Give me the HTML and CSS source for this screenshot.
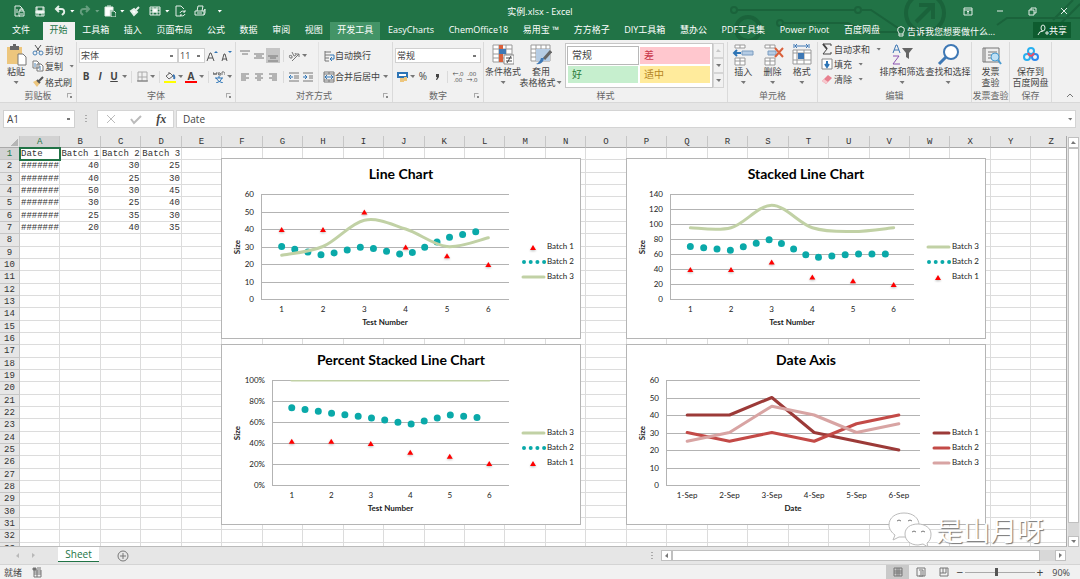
FILE: index.html
```
<!DOCTYPE html>
<html lang="zh-CN">
<head>
<meta charset="UTF-8">
<meta name="viewport" content="width=device-width, initial-scale=1.0">
<title>实例.xlsx - Excel</title>
<link rel="stylesheet" href="styles.css">
</head>
<body>
<header class="top">
    <svg class="circuit" viewBox="0 0 360 40" aria-hidden="true">
        <path d="M17 10H135M142 10H151L178 28 206 36M64 23H128L145 32H180M277 25 287 18H360M333 20 353 0M340 24 360 4M0 30H14"/>
        <circle cx="14" cy="10" r="3"/><circle cx="138" cy="10" r="3"/><circle cx="60" cy="23" r="3"/>
        <circle cx="28" cy="29" r="12" class="thick"/><path d="M21 26H35M21 31H35"/>
        <circle cx="205" cy="13" r="19" class="thick"/><path class="thick" d="M196 22 213 5M199 5H213V19"/>
    </svg>
    <div class="titlebar">
        <div class="quick">
            <button aria-label="打印预览"><svg viewBox="0 0 12 12"><path d="M6 11H1V1H6L8 3V5M5 6H10V11H5ZM6 6V4H9V6M6 9H9M3 4V8"/></svg></button>
            <button aria-label="保存"><svg viewBox="0 0 12 12"><path d="M2 2H10V11H2ZM3 2V6H9V2M4 11V8H8V11"/><path d="M2 6H10V8H2Z" fill="#fff"/></svg></button>
            <button aria-label="撤销"><svg viewBox="0 0 12 12" class="bold"><path d="M5 1 2 4 5 7M2 4H7Q11 4 10 8L8 10"/></svg></button><i class="arrow"></i>
            <button aria-label="恢复" class="dim"><svg viewBox="0 0 12 12" class="bold"><path d="M7 1 10 4 7 7M10 4H5Q1 4 2 8L4 10"/></svg></button><i class="arrow dim"></i>
            <button aria-label="粘贴"><svg viewBox="0 0 12 12"><path d="M1 2H9V5H6V11H1Z" fill="#fff"/><path d="M7 6H10L12 8V12H7ZM3 1H7"/></svg></button><i class="arrow"></i>
            <button aria-label="格式刷"><svg viewBox="0 0 12 12"><path d="M2 6 5 4 8 7 5 10ZM7 5 10 2" fill="#fff" class="bold"/></svg></button>
            <button aria-label="表格"><svg viewBox="0 0 12 12"><path d="M1 2H11V10H1ZM1 4H11M1 7H11M4 2V10M8 2V10"/><path d="M4 4H8V7H4Z" fill="#fff"/></svg></button><i class="arrow"></i>
            <button aria-label="刷新"><svg viewBox="0 0 12 12"><path d="M5 11H2V1H7L10 4M6 8A3 3 0 0 1 11 7M11 5V7H9M11 9A3 3 0 0 1 6 10M6 12V10H8"/></svg></button>
            <button aria-label="快速打印"><svg viewBox="0 0 12 12"><path d="M3 6 4 1H9L8 6M1 6H10V10H1ZM3 8H8M10 6 11 4V8L10 10"/></svg></button>
            <button aria-label="自定义"><i class="arrow"></i></button>
        </div>
        <div class="doc-name">实例.xlsx - Excel</div>
        <div class="win-btns">
            <button aria-label="功能区"><svg viewBox="0 0 12 12"><path d="M2 3H10V10H2ZM2 5H10M6 9V6M5 7 6 6 7 7"/></svg></button>
            <button aria-label="最小化"><svg viewBox="0 0 12 12"><path d="M3 6H9"/></svg></button>
            <button aria-label="还原"><svg viewBox="0 0 12 12"><path d="M3 5H8V10H3ZM5 5V3H10V8H8"/></svg></button>
            <button aria-label="关闭"><svg viewBox="0 0 12 12"><path d="M3 3 9 9M9 3 3 9"/></svg></button>
        </div>
    </div>
    <div class="tabbar">
        <nav class="tabs">
            <a href="#" class="file">文件</a>
            <a href="#" class="active">开始</a>
            <a href="#">工具箱</a>
            <a href="#">插入</a>
            <a href="#">页面布局</a>
            <a href="#">公式</a>
            <a href="#">数据</a>
            <a href="#">审阅</a>
            <a href="#">视图</a>
            <a href="#" class="hover">开发工具</a>
            <a href="#">EasyCharts</a>
            <a href="#">ChemOffice18</a>
            <a href="#">易用宝 ™</a>
            <a href="#">方方格子</a>
            <a href="#">DIY工具箱</a>
            <a href="#">慧办公</a>
            <a href="#">PDF工具集</a>
            <a href="#">Power Pivot</a>
            <a href="#">百度网盘</a>
        </nav>
        <button class="tell"><svg viewBox="0 0 12 12"><path d="M4 8Q2 6 3 3 6 0 9 3 10 6 8 8V11H4ZM4 9H8"/></svg>告诉我您想要做什么...</button>
        <button class="share"><svg viewBox="0 0 12 12"><path d="M6 1A2 3 0 0 1 6 7 2 3 0 0 1 6 1M1 11Q2 7 6 7M8 9H12M10 7V11"/></svg>共享</button>
    </div>
</header>

<section class="ribbon">
    <div class="group">
        <div class="body">
            <button class="big paste">
                <svg viewBox="0 0 22 22"><path d="M2 3H17V20H2Z" fill="#edc67d"/><path d="M5 2H8V0H11V2H14V6H5Z" fill="#666"/><path d="M13 10H18L21 13V21H13Z" fill="#fff" stroke="#777"/></svg>
                粘贴<i class="arrow"></i>
            </button>
            <div class="stack">
                <button><svg viewBox="0 0 12 12"><path d="M3 1 8 8M9 1 4 8" stroke="#555"/><g stroke="#4a83b8"><circle cx="3" cy="9" r="2"/><circle cx="9" cy="9" r="2"/></g></svg>剪切</button>
                <button><svg viewBox="0 0 12 12"><path d="M1 1H5L7 3V8H1ZM5 4H9L11 6V11H5Z" fill="#fff" stroke="#777"/><path d="M2 4H4M2 6H4M7 7H9M7 9H9" stroke="#4a83b8"/></svg>复制<i class="arrow"></i></button>
                <button><svg viewBox="0 0 12 12"><path d="M1 6 5 4 8 7 5 11Z" fill="#edc67d"/><path d="M5 4 8 7M7 5 11 1" stroke="#555" stroke-width="2"/></svg>格式刷</button>
            </div>
        </div>
        <footer>剪贴板<button class="launch" aria-label="剪贴板设置"></button></footer>
    </div>

    <div class="group">
        <div class="body rows">
            <div class="row">
                <select class="combo font-name" aria-label="字体"><option>宋体</option></select>
                <select class="combo font-size" aria-label="字号"><option>11</option></select>
                <button class="tool" aria-label="增大字号"><svg viewBox="0 0 12 12"><path d="M1 11 4 3H5L8 11M2 8H7" stroke="#555"/><path d="M8 3 10 1 12 3Z" fill="#2e75b6"/></svg></button>
                <button class="tool" aria-label="减小字号"><svg viewBox="0 0 12 12"><path d="M2 11 4 4H5L7 11M3 9H7" stroke="#555"/><path d="M8 1 10 3 12 1Z" fill="#2e75b6"/></svg></button>
            </div>
            <div class="row">
                <button class="tool"><b>B</b></button>
                <button class="tool"><b><em>I</em></b></button>
                <button class="tool"><b><u>U</u></b></button><i class="arrow"></i>
                <span class="sep"></span>
                <button class="tool" aria-label="边框"><svg viewBox="0 0 12 12"><path d="M2 1H11V10H2ZM2 6H11M6 1V10" stroke="#aaa"/><path d="M1 10H12" stroke="#777"/></svg></button><i class="arrow"></i>
                <span class="sep"></span>
                <button class="tool" aria-label="填充颜色"><svg viewBox="0 0 12 12"><path d="M2 5 6 2 9 5 5 8ZM5 3V1" stroke="#666"/><path d="M9 4Q11 5 10 8" stroke="#3e78b5" stroke-width="2"/><path d="M0 10H12V12H0Z" fill="#ff0"/></svg></button><i class="arrow"></i>
                <button class="tool font-color" aria-label="字体颜色"><b>A</b></button><i class="arrow"></i>
                <span class="sep"></span>
                <button class="tool" aria-label="拼音"><svg viewBox="0 0 12 12"><path d="M0 1 1 4 2 2 3 4 4 1M5 3H8Q7 1 5 2 5 5 8 4M9 4V1Q12 0 12 4" stroke="#777"/><path d="M2 7H10M6 5V7M3 12Q8 11 9 7M3 7Q5 11 10 12" stroke="#2e75b6"/></svg></button><i class="arrow"></i>
            </div>
        </div>
        <footer>字体<button class="launch" aria-label="字体设置"></button></footer>
    </div>

    <div class="group">
        <div class="body">
            <div class="rows align">
                <div class="row">
                    <button class="tool" aria-label="顶端对齐"><svg viewBox="0 0 12 12"><path d="M1 1H11M3 4H9"/></svg></button>
                    <button class="tool" aria-label="垂直居中"><svg viewBox="0 0 12 12"><path d="M1 4H11M3 6H9M1 8H11"/></svg></button>
                    <button class="tool on" aria-label="底端对齐"><svg viewBox="0 0 12 12"><path d="M1 6H11M3 8H9M1 11H11"/></svg></button>
                    <span class="sep"></span>
                    <button class="tool" aria-label="方向"><svg viewBox="0 0 12 12"><path d="M4 11 11 4M8 4H11V7M2 8Q0 4 4 6M2 8Q5 9 4 6M4 2 6 6Q9 6 7 3"/></svg></button><i class="arrow"></i>
                </div>
                <div class="row">
                    <button class="tool" aria-label="左对齐"><svg viewBox="0 0 12 12"><path d="M2 3H10M2 5H7M2 7H10M2 9H7"/></svg></button>
                    <button class="tool" aria-label="居中"><svg viewBox="0 0 12 12"><path d="M2 3H10M4 5H8M2 7H10M4 9H8"/></svg></button>
                    <button class="tool" aria-label="右对齐"><svg viewBox="0 0 12 12"><path d="M2 3H10M5 5H10M2 7H10M5 9H10"/></svg></button>
                    <span class="sep"></span>
                    <button class="tool" aria-label="减少缩进"><svg viewBox="0 0 12 12"><path d="M1 2H11M6 5H11M6 7H11M1 10H11"/><path d="M5 6H1M3 4 1 6 3 8" stroke="#2e75b6"/></svg></button>
                    <button class="tool" aria-label="增加缩进"><svg viewBox="0 0 12 12"><path d="M1 2H11M7 5H11M7 7H11M1 10H11"/><path d="M1 6H5M3 4 5 6 3 8" stroke="#2e75b6"/></svg></button>
                </div>
            </div>
            <div class="rows merge">
                <button class="row"><svg viewBox="0 0 12 12"><path d="M2 1V11M2 2H8M2 5H7M2 8H6M2 11H6"/><path d="M7 5H11V9H7M9 7 7 9 9 11" stroke="#2e75b6"/></svg>自动换行</button>
                <button class="row"><svg viewBox="0 0 12 12"><path d="M1 1H11V11H1ZM1 3H11M1 9H11M6 1V3M6 9V11"/><path d="M2 6H10M4 4 2 6 4 8M8 4 10 6 8 8" stroke="#2e75b6"/></svg>合并后居中<i class="arrow"></i></button>
            </div>
        </div>
        <footer>对齐方式<button class="launch" aria-label="对齐设置"></button></footer>
    </div>

    <div class="group">
        <div class="body rows">
            <div class="row">
                <select class="combo number" aria-label="数字格式"><option>常规</option></select>
            </div>
            <div class="row">
                <button class="tool" aria-label="会计格式"><svg viewBox="0 0 12 12"><path d="M1 1H12V7H1Z" fill="#2e75b6"/><path d="M3 3H10V5H3Z" fill="#fff"/><path d="M4 7H8V11H4ZM8 6H11V10H8Z" fill="#edc67d"/></svg></button><i class="arrow"></i>
                <button class="tool">%</button>
                <button class="tool" aria-label="千位分隔"><svg viewBox="0 0 12 12"><path d="M5 3H8V6L6 9H5L6 6H5Z" fill="#444"/></svg></button>
                <span class="sep"></span>
                <button class="tool dec"><span>←.0</span><span>.00</span></button>
                <button class="tool dec"><span>.00</span><span>→.0</span></button>
            </div>
        </div>
        <footer>数字<button class="launch" aria-label="数字设置"></button></footer>
    </div>

    <div class="group">
        <div class="body">
            <button class="big">
                <svg viewBox="0 0 22 22"><path d="M1 1H20V18H1ZM7 1V18M14 1V18M1 5H20M1 10H20M1 14H20" fill="#fff" stroke="#999"/><path d="M7 1H11V5H7ZM7 10H11V18H7Z" fill="#d9603b"/><path d="M7 5H14V10H7Z" fill="#3e78b5"/><path d="M12 11H22V20H12Z" fill="#fff" stroke="#888"/><path d="M14 14H20M14 17H20M19 12 15 19" stroke="#444"/></svg>
                条件格式<i class="arrow"></i>
            </button>
            <button class="big">
                <svg viewBox="0 0 22 22"><path d="M1 1H20V17H1ZM1 5H20M1 9H20M1 13H20M6 1V17M11 1V17M16 1V17" fill="#fff" stroke="#999"/><path d="M6 5H20V17H6Z" fill="#b5cce4"/><path d="M21 7 14 15" stroke="#666" stroke-width="3"/><path d="M14 14Q13 21 6 20 10 18 11 14Z" fill="#3e78b5"/></svg>
                套用<span>表格格式<i class="arrow"></i></span>
            </button>
            <div class="gallery">
                <button class="style normal">常规</button>
                <button class="style bad">差</button>
                <button class="style good">好</button>
                <button class="style neutral">适中</button>
            </div>
            <div class="gallery-nav">
                <button aria-label="上一行"><i class="arrow up dim"></i></button>
                <button aria-label="下一行"><i class="arrow"></i></button>
                <button aria-label="更多"><i class="arrow"></i></button>
            </div>
        </div>
        <footer>样式</footer>
    </div>

    <div class="group">
        <div class="body even">
            <button class="big">
                <svg viewBox="0 0 22 22"><path d="M3 1H13V4H3ZM8 1V4M3 14H13V21H3ZM8 14V21M3 17H13" fill="#fff" stroke="#999"/><path d="M10 7H21V11H10Z" fill="#b5cce4" stroke="#7b9cc0"/><path d="M9 9H2M5 6 2 9 5 12" stroke="#2e75b6" stroke-width="2"/></svg>
                插入<i class="arrow"></i>
            </button>
            <button class="big">
                <svg viewBox="0 0 22 22"><path d="M3 1H13V4H3ZM8 1V4M3 14H13V21H3ZM8 14V21M3 17H13" fill="#fff" stroke="#999"/><path d="M6 7H14V11H6Z" fill="#b5cce4" stroke="#7b9cc0"/><path d="M13 4 21 13M21 4 13 13" stroke="#d9603b" stroke-width="2"/></svg>
                删除<i class="arrow"></i>
            </button>
            <button class="big">
                <svg viewBox="0 0 22 22"><path d="M2 6H20V20H2ZM2 9H20M2 16H20M6 6V20M13 6V20" fill="#fff" stroke="#999"/><path d="M7 9H13V15H7Z" fill="#3e78b5"/><path d="M4 2H17M6 0 4 2 6 4M15 0 17 2 15 4M3 0V4M18 0V4" stroke="#3e78b5"/></svg>
                格式<i class="arrow"></i>
            </button>
        </div>
        <footer>单元格</footer>
    </div>

    <div class="group">
        <div class="body">
            <div class="stack edit">
                <button><svg viewBox="0 0 12 12"><path d="M10 3V1H2L6 6 2 11H10V9" stroke="#444"/><path d="M2 1 6 6" stroke="#444" stroke-width="2"/></svg>自动求和<i class="arrow"></i></button>
                <button><svg viewBox="0 0 12 12"><path d="M1 1H11V11H1Z" fill="#fff" stroke="#888"/><path d="M6 3V8M4 6 6 9 8 6" stroke="#2e75b6" stroke-width="2"/></svg>填充<i class="arrow"></i></button>
                <button><svg viewBox="0 0 12 12"><path d="M1 8 7 2 11 5 5 11Z" fill="#e8808f"/><path d="M1 8 3 6 7 9 5 11Z" fill="#f7c9cf"/></svg>清除<i class="arrow"></i></button>
            </div>
            <button class="big wide">
                <svg viewBox="0 0 22 22"><path d="M2 9 5 1H6L9 9M3 6H8" stroke="#3e78b5" stroke-width="1"/><path d="M2 12H8L2 20H9" stroke="#8b52b0" stroke-width="1"/><path d="M11 4H22L18 9V15L15 13V9Z" fill="#666"/></svg>
                排序和筛选<i class="arrow"></i>
            </button>
            <button class="big wide">
                <svg viewBox="0 0 22 22"><circle cx="14" cy="8" r="7" fill="#fff" stroke="#3e78b5" stroke-width="2"/><path d="M9 13 2 20" stroke="#3e78b5" stroke-width="3"/></svg>
                查找和选择<i class="arrow"></i>
            </button>
        </div>
        <footer>编辑</footer>
    </div>

    <div class="group">
        <div class="body even">
            <button class="big">
                <svg viewBox="0 0 22 22"><path d="M3 4H19V18H3ZM5 4V18M8 8H17M8 11H12M8 14H12" fill="#eee" stroke="#777"/><circle cx="15" cy="13" r="4" fill="#bfe0f5" stroke="#4a9bd0"/><path d="M18 16 21 20" stroke="#4a9bd0" stroke-width="2"/></svg>
                发票<span>查验</span>
            </button>
        </div>
        <footer>发票查验</footer>
    </div>

    <div class="group">
        <div class="body even">
            <button class="big">
                <svg viewBox="0 0 22 22"><g stroke-width="2"><circle cx="7" cy="13" r="3" stroke="#27b0f0"/><circle cx="15" cy="13" r="3" stroke="#2b87ee"/><circle cx="11" cy="7" r="3" stroke="#27b0f0"/><path d="M8 9Q11 15 14 9" stroke="#ec4c65"/></g></svg>
                保存到<span>百度网盘</span>
            </button>
        </div>
        <footer>保存</footer>
    </div>
    <button class="collapse" aria-label="折叠功能区"><svg viewBox="0 0 12 12"><path d="M3 7 6 4 9 7"/></svg></button>
</section>

<section class="formula">
    <select class="combo name-box" aria-label="名称框"><option>A1</option></select>
    <span class="dots"></span>
    <div class="fx">
        <button aria-label="取消"><svg viewBox="0 0 12 12"><path d="M2 2 10 10M10 2 2 10"/></svg></button>
        <button aria-label="输入"><svg viewBox="0 0 12 12"><path d="M1 6 4 10 11 3" stroke-width="2"/></svg></button>
        <button class="fn">fx</button>
    </div>
    <input class="formula-text" type="text" value="Date" aria-label="编辑栏">
    <button class="expand" aria-label="展开编辑栏"><i class="arrow"></i></button>
</section>

<main class="work">
    <div class="sheet">
        <table id="grid"></table>
        <div class="chart c1" id="line"></div>
        <div class="chart c2" id="stacked"></div>
        <div class="chart c3" id="percent"></div>
        <div class="chart c4" id="date"></div>
    </div>
    <div class="vscroll">
        <button aria-label="向上"><i class="arrow up"></i></button>
        <span class="thumb"></span>
        <span class="track"></span>
        <button aria-label="向下"><i class="arrow"></i></button>
    </div>
    <div class="watermark">
        <svg viewBox="0 0 44 38"><path d="M16 4C7 4 1 9 1 16 1 20 4 24 7 26L5 31 11 28H17C25 28 31 22 31 16 31 9 25 4 16 4Z"/><path d="M30 15C22 15 17 19 17 25S22 36 30 36L35 35 40 38 39 34C42 32 43 29 43 25 43 19 37 15 30 15Z"/><path class="eyes" d="M9 12Q11 10 13 12M20 12Q22 10 24 12M24 23Q26 21 28 23M33 23Q35 21 37 23"/></svg>
        <span>是山月呀</span>
    </div>
</main>

<section class="sheetbar">
    <div class="sheet-nav">
        <i class="arrow left"></i><i class="arrow right"></i>
    </div>
    <a href="#" class="sheet-tab">Sheet</a>
    <button class="add" aria-label="新工作表"><svg viewBox="0 0 12 12"><circle cx="6" cy="6" r="5"/><path d="M3 6H9M6 3V9"/></svg></button>
    <span class="dots"></span>
    <div class="hscroll">
        <button aria-label="向左"><i class="arrow left"></i></button>
        <span class="thumb"></span>
        <span class="track"></span>
        <button aria-label="向右"><i class="arrow right"></i></button>
    </div>
</section>

<footer class="status">
    <span>就绪</span>
    <svg class="macro" viewBox="0 0 12 12"><path d="M3 4H10V11H3ZM3 6H10M3 8H10M6 4V11"/><path d="M2 2H5V4H2ZM6 2H10" fill="#666"/></svg>
    <div class="views">
        <button class="on" aria-label="普通"><svg viewBox="0 0 12 12"><path d="M2 2H10V10H2ZM2 5H10M2 7H10M5 2V10M7 2V10"/></svg></button>
        <button aria-label="页面布局"><svg viewBox="0 0 12 12"><path d="M2 2H10V10H2ZM4 4H8V10H4M6 5V9"/></svg></button>
        <button aria-label="分页预览"><svg viewBox="0 0 12 12"><path d="M2 2H10V10H2ZM5 2V7H8V2M2 7H5"/></svg></button>
    </div>
    <button class="zoom-btn" aria-label="缩小">−</button>
    <input class="zoom" type="range" min="10" max="190" value="90" aria-label="缩放">
    <button class="zoom-btn" aria-label="放大">+</button>
    <span class="zoom-num">90%</span>
</footer>
<script src="script.js"></script>
</body>
</html>
```

FILE: styles.css
```
* {
    box-sizing: border-box;
}
body {
    margin: 0;
    height: 100vh;
    display: flex;
    flex-direction: column;
    overflow: hidden;
    background: #e6e6e6;
    color: #444;
    font: 9px/11px "Open Sans", "Noto Sans CJK SC", sans-serif;
}
button,
select,
input {
    margin: 0;
    padding: 0;
    border: 0;
    background: none;
    color: inherit;
    font: inherit;
}
button {
    display: flex;
    align-items: center;
    justify-content: center;
    white-space: nowrap;
}
a {
    color: inherit;
    text-decoration: none;
}
svg {
    display: block;
    width: 12px;
    height: 12px;
    flex: none;
    fill: none;
    stroke: #777;
}
.ribbon svg [fill]:not([stroke]) {
    stroke: none;
}
.arrow {
    flex: none;
    width: 7px;
    height: 3px;
    background: #777;
    clip-path: polygon(1px 0, 6px 0, 4px 3px);
}
.arrow.up {
    transform: rotate(180deg);
}
.arrow.left {
    transform: rotate(90deg);
}
.arrow.right {
    transform: rotate(-90deg);
}
.dim {
    opacity: .35;
}

/* title bar and tabs */
.top {
    position: relative;
    flex: none;
    background: #217346;
    color: #fff;
}
.top svg {
    stroke: #e4efe8;
}
.top .arrow {
    width: 5px;
    background: #fff;
    clip-path: polygon(0 0, 5px 0, 2px 3px);
}
.top .bold {
    stroke-width: 2;
}
.top .circuit {
    position: absolute;
    right: 0;
    top: 0;
    width: 360px;
    height: 40px;
    stroke: #1a633b;
    stroke-width: 2;
}
.circuit .thick {
    stroke-width: 4;
}
.titlebar {
    position: relative;
    display: grid;
    grid-template-columns: 1fr auto 1fr;
    align-items: center;
    height: 22px;
}
.quick {
    display: flex;
    align-items: center;
    padding-left: 10px;
}
.quick button {
    width: 20px;
}
.win-btns {
    display: flex;
    justify-content: flex-end;
}
.win-btns button {
    width: 32px;
}
.tabbar {
    position: relative;
    display: flex;
    height: 18px;
}
.tabs {
    flex: 1;
    display: flex;
    justify-content: space-between;
    padding-right: 6px;
}
.tabs a {
    padding: 0 7px;
    line-height: 16px;
    white-space: nowrap;
}
.tabs .file {
    padding: 0 12px;
}
.tabs .active {
    background: #f1f1f1;
    color: #217346;
}
.tabs .hover {
    background: #439467;
}
.tell {
    width: 140px;
    justify-content: flex-start;
    padding-left: 2px;
}
.share {
    width: 38px;
    height: 16px;
    margin-right: 9px;
    background: #0e5c2f;
}

/* ribbon */
.ribbon {
    flex: none;
    display: grid;
    grid-template-columns: 77px 159px 157px 91px 1fr 90px 154px 38px 42px 28px;
    height: 63px;
    background: #f1f1f1;
    border-bottom: 1px solid #d8d8d8;
}
.group {
    display: flex;
    flex-direction: column;
    margin: 2px 0 0;
    border-right: 1px solid #dadada;
}
.body {
    flex: 1;
    display: flex;
}
.group footer {
    position: relative;
    text-align: center;
    white-space: nowrap;
    color: #666;
    height: 12px;
}
.launch {
    position: absolute;
    right: 4px;
    bottom: 4px;
    width: 5px;
    height: 5px;
    border: 1px solid #aaa;
    border-right-color: transparent;
    border-bottom-color: transparent;
}
.launch::after {
    content: "";
    position: absolute;
    right: -1px;
    bottom: -1px;
    width: 2px;
    height: 2px;
    background: #888;
}
.big {
    flex-direction: column;
    justify-content: flex-start;
    width: 38px;
    padding-top: 2px;
}
.big svg {
    width: 22px;
    height: 22px;
}
.big .arrow {
    margin-top: 4px;
}
.big span {
    display: flex;
    align-items: center;
}
.big span .arrow {
    margin: 0;
}
.big.wide {
    width: 46px;
}
.paste {
    width: 32px;
}
.stack {
    display: flex;
    flex-direction: column;
    gap: 4px;
    padding-top: 2px;
}
.stack button {
    justify-content: flex-start;
    gap: 1px;
}
.stack.edit {
    width: 61px;
    gap: 3px;
    padding: 1px 0 0 3px;
}
.stack .arrow {
    margin-left: 4px;
}
.even {
    justify-content: space-evenly;
}
.even .big {
    width: 28px;
}
.rows {
    display: flex;
    flex-direction: column;
    gap: 6px;
    padding: 6px 2px 0;
}
.row {
    display: flex;
    align-items: center;
    justify-content: flex-start;
    height: 15px;
}
.combo {
    appearance: none;
    height: 15px;
    padding: 0 4px 0 1px;
    border: 1px solid #d0d0d0;
    background: #fff linear-gradient(#777, #777) no-repeat right 4px center / 3px 2px;
}
.font-name {
    width: 99px;
}
.font-size {
    width: 27px;
}
.number {
    flex: 1;
}
.tool {
    width: 14px;
    height: 15px;
    font-size: 10px;
}
.tool.on {
    background: #c5c5c5;
}
.sep {
    width: 1px;
    height: 12px;
    margin: 0 3px;
    background: #dadada;
}
.font-color b {
    width: 12px;
    height: 12px;
    line-height: 10px;
    border-bottom: 2px solid #f00;
}
.dec {
    flex-direction: column;
    font-size: 6px;
    line-height: 6px;
}
.align {
    width: 83px;
    border-right: 1px solid #e2e2e2;
}
.merge {
    padding-left: 4px;
}
.merge .arrow {
    margin-left: 2px;
}
.gallery {
    flex: 1;
    display: grid;
    grid-template-columns: 1fr 1fr;
    grid-auto-rows: 17px;
    gap: 2px;
    height: 45px;
    padding: 3px 2px;
    margin: 1px 0 0 5px;
    border: 1px solid #c6c6c6;
    background: #fff;
}
.style {
    justify-content: flex-start;
    padding-left: 4px;
    font: 10px/12px "Liberation Serif", "Noto Sans CJK SC", serif;
}
.normal {
    outline: 1px solid #b8b8b8;
}
.bad {
    background: #ffc7ce;
    color: #c9354a;
}
.good {
    background: #c6efce;
    color: #2a7a3a;
}
.neutral {
    background: #ffeb9c;
    color: #b5851f;
}
.gallery-nav {
    width: 11px;
    height: 45px;
    margin: 1px 3px 0 0;
    display: grid;
}
.gallery-nav button {
    border: 1px solid #d5d5d5;
}
.collapse {
    align-self: end;
    padding-left: 8px;
}

/* formula bar */
.formula {
    flex: none;
    display: flex;
    height: 33px;
    padding: 7px 4px 8px 3px;
    font-size: 10px;
}
.name-box {
    width: 72px;
    height: 18px;
    padding-left: 3px;
}
.dots {
    width: 2px;
    height: 8px;
    background: repeating-linear-gradient(#aaa 0 1px, transparent 1px 3px);
}
.formula .dots {
    margin: 5px 10px 0;
}
.fx {
    width: 77px;
    display: flex;
    justify-content: space-around;
    background: #fff;
    border: 1px solid #d4d4d4;
}
.fx svg {
    stroke: #bbb;
}
.fn {
    font: italic bold 12px "Liberation Serif", serif;
}
.formula-text {
    flex: 1;
    min-width: 0;
    margin-left: 2px;
    padding-left: 6px;
    background: #fff;
    border: 1px solid #d4d4d4;
    border-right: 0;
}
.expand {
    width: 11px;
    background: #fff;
    border: 1px solid #d4d4d4;
    border-left: 0;
}

/* worksheet */
.work {
    position: relative;
    flex: 1;
    min-height: 0;
    display: flex;
}
.sheet {
    position: relative;
    flex: 1;
    overflow: hidden;
    background: #fff;
    border-right: 1px solid #aaa;
    border-bottom: 1px solid #bbb;
}
#grid {
    width: 1072px;
    height: 419px;
    table-layout: fixed;
    border-spacing: 0;
    font: 9px/10px "Liberation Mono", monospace;
    color: #333;
}
#grid th,
#grid td {
    padding: 1px 0 0;
    white-space: nowrap;
    border-right: 1px solid #dcdcdc;
    border-bottom: 1px solid #dcdcdc;
}
#grid th {
    background: #e6e6e6;
    font-weight: normal;
    border-color: #c6c6c6;
}
#grid thead th {
    height: 12px;
    border-bottom-color: #aaa;
}
#grid th:first-child {
    width: 20px;
}
#grid .corner {
    background: linear-gradient(135deg, transparent 50%, #b5b5b5 50%) no-repeat right 1px bottom 1px / 7px 7px #e6e6e6;
}
#grid th.cur {
    background: #d2d2d2;
    color: #217346;
}
#grid td {
    text-align: right;
    padding-right: 1px;
}
#grid .text {
    text-align: left;
    padding: 1px 0 0 1px;
}
#grid .cell-on {
    outline: 2px solid #217346;
    outline-offset: -1px;
}
.chart {
    position: absolute;
    width: 360px;
    height: 181px;
    background: #fff;
    border: 1px solid #b5b5b5;
}
.c1,
.c3 {
    left: 221px;
}
.c2,
.c4 {
    left: 626px;
}
.c1,
.c2 {
    top: 22px;
}
.c3,
.c4 {
    top: 208px;
}
.chart svg {
    width: 358px;
    height: 179px;
    font: 8px Lato, sans-serif;
    stroke: none;
}
.chart text {
    fill: #222;
}
.chart .title {
    font-size: 14px;
    font-weight: bold;
    fill: #000;
}
.chart .axis-title {
    font-weight: bold;
}
.chart .rule {
    stroke: #b3b3b3;
}
.chart .series {
    stroke-width: 3;
    stroke-linecap: round;
    stroke-linejoin: round;
}
.chart .dotted {
    stroke: #0aa9a9;
    stroke-width: 7;
    stroke-dasharray: 0 13.4;
}
.chart .dotted.key {
    stroke-width: 4;
    stroke-dasharray: 0 6.7;
}
.chart .mark {
    fill: #f00;
    filter: drop-shadow(0 1px 1px #bbb);
}
.vscroll,
.hscroll {
    display: flex;
}
.vscroll {
    width: 13px;
    flex-direction: column;
    padding: 1px 1px 0;
}
.vscroll button,
.hscroll button,
.thumb {
    background: #fff;
    border: 1px solid #c0c0c0;
}
.vscroll button {
    height: 11px;
}
.vscroll .thumb,
.hscroll .thumb {
    flex: 1;
}
.track {
    background: #d8d8d8;
}
.vscroll .track {
    height: 13px;
}
.watermark {
    position: absolute;
    right: 36px;
    bottom: 0;
    display: flex;
    align-items: flex-end;
    gap: 4px;
    color: #fff;
    font: 27px/34px "Noto Sans CJK SC", sans-serif;
    text-shadow: 1px 1px 1px #777;
}
.watermark svg {
    width: 44px;
    height: 38px;
    fill: #fff;
    stroke: #bbb;
}
.watermark .eyes {
    stroke: #777;
}

/* bottom bars */
.sheetbar {
    flex: none;
    display: flex;
    height: 17px;
    align-items: center;
    padding-right: 14px;
}
.sheet-nav {
    width: 58px;
    display: flex;
    gap: 9px;
    padding-left: 14px;
    opacity: .4;
}
.sheet-tab {
    width: 41px;
    align-self: flex-start;
    text-align: center;
    font-size: 10px;
    line-height: 14px;
    color: #217346;
    background: #fff;
    border-bottom: 1px solid #217346;
}
.add {
    margin-left: 18px;
}
.sheetbar .dots {
    margin-left: auto;
    margin-right: 8px;
}
.hscroll {
    width: 38%;
    height: 11px;
}
.hscroll button {
    width: 11px;
}
.hscroll .track {
    width: 15px;
}
.status {
    flex: none;
    display: flex;
    align-items: center;
    height: 15px;
    padding: 0 10px 0 4px;
    background: #f1f1f1;
    border-top: 1px solid #d4d4d4;
}
.macro {
    margin-left: 9px;
}
.views {
    display: flex;
    margin-left: auto;
}
.views button {
    width: 23px;
    height: 14px;
}
.views .on {
    background: #c9c9c9;
}
.zoom-btn {
    width: 10px;
    font-size: 12px;
}
.zoom {
    appearance: none;
    width: 70px;
    height: 8px;
    background: linear-gradient(#aaa, #aaa) no-repeat center / 100% 1px;
}
.zoom::-webkit-slider-thumb {
    appearance: none;
    width: 3px;
    height: 8px;
    background: #555;
}
.zoom-num {
    width: 25px;
    text-align: right;
}
```

FILE: script.js
```
(function(){
    let data = [
        ["Date","Batch 1","Batch 2","Batch 3"],
        ["#######",40,30,25],
        ["#######",40,25,30],
        ["#######",50,30,45],
        ["#######",30,25,40],
        ["#######",25,35,30],
        ["#######",20,40,35]
    ];
    let letters = "ABCDEFGHIJKLMNOPQRSTUVWXYZ".split("");
    let html = "<thead><tr><th class='corner'></th>";
    letters.forEach(function(l,i){
        html += `<th${i == 0 ? " class='cur'" : ""}>${l}</th>`;
    });
    html += "</tr></thead><tbody>";
    for(let r = 0; r < 33; r++){
        html += `<tr><th${r == 0 ? " class='cur'" : ""}>${r + 1}</th>`;
        for(let c = 0; c < 26; c++){
            let val = data[r] && data[r][c] !== undefined ? data[r][c] : "";
            let cls = typeof val == "string" && val ? "text" : "";
            if(r == 0 && c == 0){
                cls += " cell-on";
            }
            html += cls ? `<td class="${cls}">${val}</td>` : `<td>${val}</td>`;
        }
        html += "</tr>";
    }
    document.querySelector("#grid").innerHTML = html + "</tbody>";

    let b1 = [40,40,50,30,25,20];
    let b2 = [30,25,30,25,35,40];
    let b3 = [25,30,45,40,30,35];
    let sum12 = b1.map((v,i) => v + b2[i]);
    let total = sum12.map((v,i) => v + b3[i]);
    let top = 35, bottom = 140;

    function straight(pts){
        return "M" + pts.map(p => p.join(" ")).join("L");
    }
    function smooth(pts){
        let d = "M" + pts[0].join(" ");
        for(let i = 0; i < pts.length - 1; i++){
            let p0 = pts[i - 1] || pts[i], p1 = pts[i], p2 = pts[i + 1], p3 = pts[i + 2] || p2;
            d += `C${p1[0] + (p2[0] - p0[0]) / 6} ${p1[1] + (p2[1] - p0[1]) / 6} ${p2[0] - (p3[0] - p1[0]) / 6} ${p2[1] - (p3[1] - p1[1]) / 6} ${p2[0]} ${p2[1]}`;
        }
        return d;
    }
    function mark(x,y){
        return `<path class="mark" d="M${x} ${y - 2}L${x + 3} ${y + 3}H${x - 3}Z"/>`;
    }
    function draw(o){
        let step = (o.right - o.left) / 6;
        let out = `<clipPath id="${o.id}-clip"><rect x="${o.left}" y="${top}" width="${o.right - o.left}" height="${bottom - top}"/></clipPath>`;
        out += `<text class="title" x="179" y="20" text-anchor="middle">${o.title}</text>`;
        for(let v = 0; v <= o.max; v += o.step){
            let y = Math.round(bottom - (bottom - top) * v / o.max) + .5;
            out += `<path class="rule" d="M${o.left} ${y}H${o.right}"/>`;
            out += `<text x="${o.left - 7}" y="${y + 2}" text-anchor="end">${v}${o.unit || ""}</text>`;
        }
        out += `<path class="rule" d="M${o.left + .5} ${top}V${bottom}"/>`;
        let plot = "", keys = "";
        o.series.forEach(function(s,n){
            let pts = s.data.map((v,i) => [o.left + step * (i + .5), bottom - (bottom - top) * v / o.max]);
            let ky = 88 + n * 15;
            if(s.kind == "mark"){
                plot += pts.map(p => mark(p[0],p[1])).join("");
                keys += mark(311,ky);
            }else if(s.kind == "dot"){
                plot += `<path class="series dotted" d="${straight(pts)}"/>`;
                keys += `<path class="series dotted key" d="M302 ${ky}H323"/>`;
            }else{
                plot += `<path class="series" stroke="${s.color}" d="${s.kind == "smooth" ? smooth(pts) : straight(pts)}"/>`;
                keys += `<path class="series" stroke="${s.color}" d="M${s.kind == "smooth" ? 301 : 307} ${ky}H322"/>`;
            }
            keys += `<text x="325" y="${ky + 2}">${s.name}</text>`;
        });
        out += `<g clip-path="url(#${o.id}-clip)">${plot}</g>${keys}`;
        for(let i = 0; i < 6; i++){
            out += `<text x="${o.left + step * (i + .5)}" y="153" text-anchor="middle">${i + 1}${o.suffix || ""}</text>`;
        }
        out += `<text class="axis-title" x="${(o.left + o.right) / 2}" y="166" text-anchor="middle">${o.axis}</text>`;
        out += `<text class="axis-title" transform="translate(18 88) rotate(-90)" text-anchor="middle">Size</text>`;
        document.querySelector("#" + o.id).innerHTML = `<svg viewBox="0 0 358 179">${out}</svg>`;
    }

    let green = "#c1d1a5";
    draw({id: "line", title: "Line Chart", left: 39, right: 287, max: 60, step: 10, axis: "Test Number", series: [
        {name: "Batch 1", kind: "mark", data: b1},
        {name: "Batch 2", kind: "dot", data: b2},
        {name: "Batch 3", kind: "smooth", color: green, data: b3}
    ]});
    draw({id: "stacked", title: "Stacked Line Chart", left: 43, right: 287, max: 140, step: 20, axis: "Test Number", series: [
        {name: "Batch 3", kind: "smooth", color: green, data: total},
        {name: "Batch 2", kind: "dot", data: sum12},
        {name: "Batch 1", kind: "mark", data: b1}
    ]});
    draw({id: "percent", title: "Percent Stacked Line Chart", left: 50, right: 287, max: 100, step: 20, unit: "%", axis: "Test Number", series: [
        {name: "Batch 3", kind: "smooth", color: green, data: total.map(v => 100)},
        {name: "Batch 2", kind: "dot", data: sum12.map((v,i) => v / total[i] * 100)},
        {name: "Batch 1", kind: "mark", data: b1.map((v,i) => v / total[i] * 100)}
    ]});
    draw({id: "date", title: "Date Axis", left: 39, right: 293, max: 60, step: 10, suffix: "-Sep", axis: "Date", series: [
        {name: "Batch 1", kind: "line", color: "#9c3a38", data: b1},
        {name: "Batch 2", kind: "line", color: "#c34a47", data: b2},
        {name: "Batch 3", kind: "line", color: "#d8a4a3", data: b3}
    ]});
})();
```
